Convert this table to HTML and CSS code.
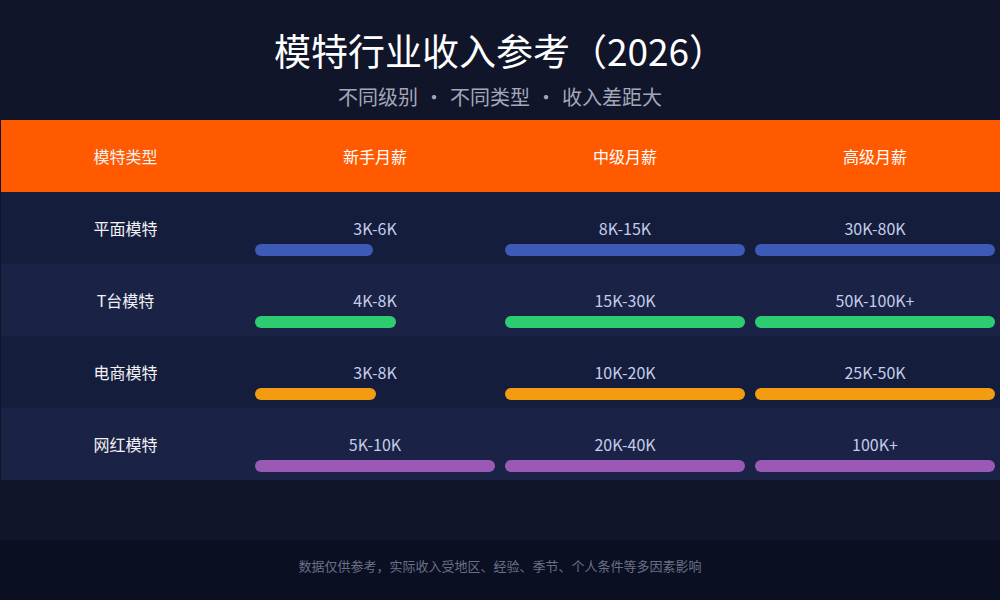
FILE: index.html
```html
<!DOCTYPE html>
<html lang="zh-CN">
<head>
<meta charset="utf-8">
<title>模特行业收入参考（2026）</title>
<link rel="stylesheet" href="styles.css">
</head>
<body>
<div class="page">
  <header class="head">
    <h1 class="title">模特行业收入参考（2026）</h1>
    <p class="subtitle">不同级别<span class="dot"> · </span>不同类型<span class="dot"> · </span>收入差距大</p>
  </header>
  <div class="table">
    <div class="row row-head">
      <div class="cell cell-type">模特类型</div>
      <div class="cell">新手月薪</div>
      <div class="cell">中级月薪</div>
      <div class="cell">高级月薪</div>
    </div>
    <div class="row row-odd">
      <div class="cell cell-type">平面模特</div>
      <div class="cell cell-val"><span class="val">3K-6K</span><span class="bar bar-blue" style="width:118px"></span></div>
      <div class="cell cell-val"><span class="val">8K-15K</span><span class="bar bar-blue" style="width:240px"></span></div>
      <div class="cell cell-val"><span class="val">30K-80K</span><span class="bar bar-blue" style="width:240px"></span></div>
    </div>
    <div class="row row-even">
      <div class="cell cell-type">T台模特</div>
      <div class="cell cell-val"><span class="val">4K-8K</span><span class="bar bar-green" style="width:141px"></span></div>
      <div class="cell cell-val"><span class="val">15K-30K</span><span class="bar bar-green" style="width:240px"></span></div>
      <div class="cell cell-val"><span class="val">50K-100K+</span><span class="bar bar-green" style="width:240px"></span></div>
    </div>
    <div class="row row-odd">
      <div class="cell cell-type">电商模特</div>
      <div class="cell cell-val"><span class="val">3K-8K</span><span class="bar bar-orange" style="width:121px"></span></div>
      <div class="cell cell-val"><span class="val">10K-20K</span><span class="bar bar-orange" style="width:240px"></span></div>
      <div class="cell cell-val"><span class="val">25K-50K</span><span class="bar bar-orange" style="width:240px"></span></div>
    </div>
    <div class="row row-even">
      <div class="cell cell-type">网红模特</div>
      <div class="cell cell-val"><span class="val">5K-10K</span><span class="bar bar-purple" style="width:240px"></span></div>
      <div class="cell cell-val"><span class="val">20K-40K</span><span class="bar bar-purple" style="width:240px"></span></div>
      <div class="cell cell-val"><span class="val">100K+</span><span class="bar bar-purple" style="width:240px"></span></div>
    </div>
  </div>
  <div class="spacer"></div>
  <footer class="foot">数据仅供参考，实际收入受地区、经验、季节、个人条件等多因素影响</footer>
</div>
</body>
</html>
```

FILE: styles.css
```css
* { box-sizing: border-box; }
html, body {
  margin: 0;
  padding: 0;
  background: #10152a;
}
body {
  font-family: "Noto Sans CJK SC", "Noto Sans", sans-serif;
  color: #ffffff;
}
.page {
  width: 1000px;
  height: 600px;
  display: flex;
  flex-direction: column;
  background: #10152a;
}
.head {
  height: 120px;
  padding-top: 26px;
  text-align: center;
}
.title {
  margin: 0;
  font-size: 37px;
  line-height: 48px;
  font-weight: 400;
  color: #ffffff;
}
.subtitle {
  margin: 9px 0 0;
  font-size: 20px;
  line-height: 28px;
  height: 28px;
  color: #a3a7bb;
}
.dot {
  padding: 0 1.5px;
  white-space: pre;
}
.table {
  margin-left: 1px;
  display: flex;
  flex-direction: column;
}
.row {
  display: grid;
  grid-template-columns: 249px 250px 250px 250px;
  height: 72px;
}
.row-head { background: #ff5a00; }
.row-odd { background: #151d3d; }
.row-even { background: #1a2246; }
.cell {
  display: flex;
  align-items: center;
  justify-content: center;
  font-size: 16px;
  color: #ffffff;
}
.cell-type {
  color: #f2f2f5;
}
.cell-val {
  flex-direction: column;
  align-items: stretch;
  justify-content: flex-start;
  padding: 25px 5px 0 5px;
}
.val {
  display: block;
  text-align: center;
  font-size: 16px;
  line-height: 22px;
  color: #c3cde9;
}
.bar {
  display: block;
  height: 12px;
  margin-top: 5px;
  border-radius: 6px;
}
.bar-blue { background: #3d5bb6; }
.bar-green { background: #2ecc71; }
.bar-orange { background: #f39c12; }
.bar-purple { background: #9b59b6; }
.spacer { flex: 1; }
.foot {
  height: 60px;
  padding-top: 16px;
  background: #0b0f22;
  text-align: center;
  font-size: 13px;
  line-height: 20px;
  color: #6b6f86;
}
```
